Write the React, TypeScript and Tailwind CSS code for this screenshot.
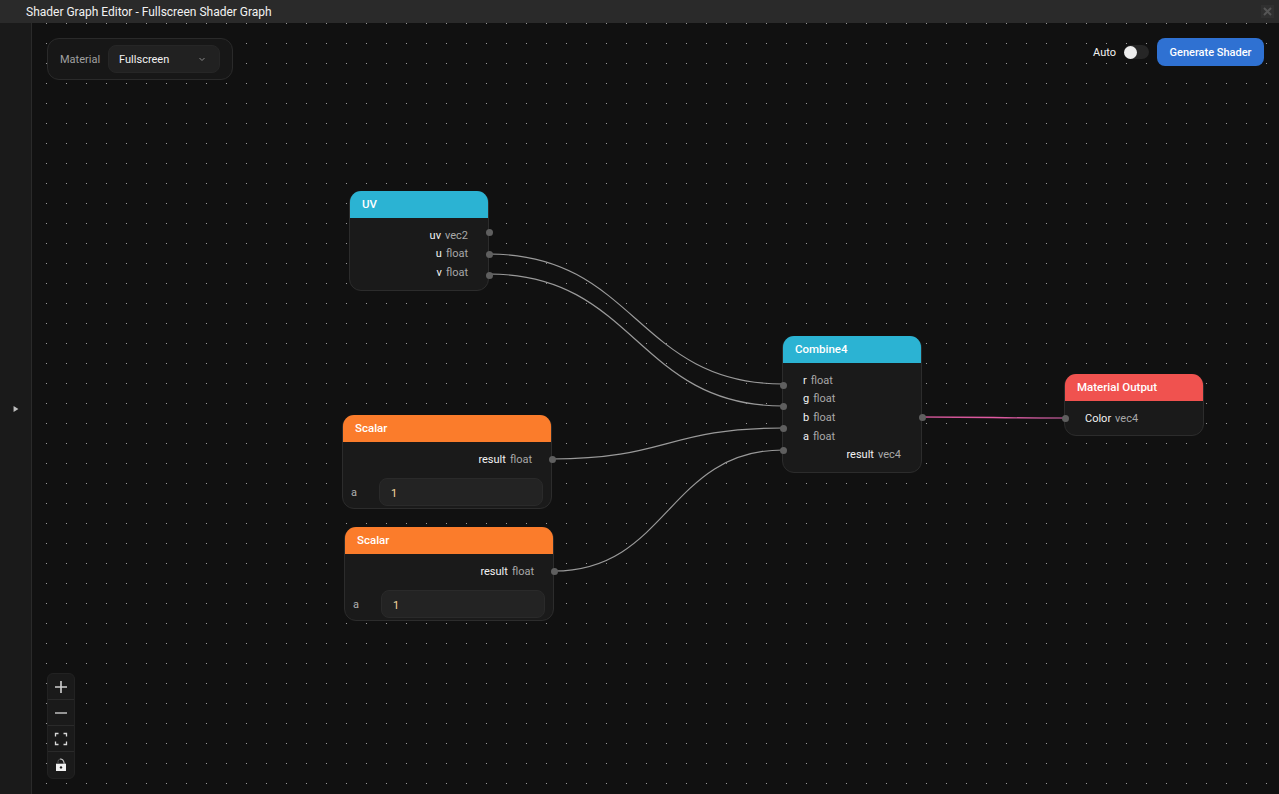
import React from "react";

const font = { fontFamily: 'Roboto, "Noto Sans", sans-serif' };

function Handle({ y, side }: { y: number; side: "left" | "right" }) {
  return (
    <span
      className={`absolute w-[7px] h-[7px] rounded-full bg-[#5f5f5f] ${side === "left" ? "left-[-3.5px]" : "right-[-4.5px]"}`}
      style={{ top: y - 0.5 }}
    />
  );
}

function Port({ name, type, right }: { name: string; type: string; right?: boolean }) {
  return (
    <div className={`h-[18.6px] flex items-center gap-[4px] text-[11px] leading-none ${right ? "justify-end" : ""}`}>
      <span className="text-[#f2f2f2]">{name}</span>
      <span className="text-[#a8a8a8]">{type}</span>
    </div>
  );
}

function Node({
  title,
  color,
  x,
  y,
  w,
  h,
  children,
}: {
  title: string;
  color: string;
  x: number;
  y: number;
  w: number;
  h: number;
  children: React.ReactNode;
}) {
  return (
    <div
      className="absolute rounded-[12px] border border-[#2c2c2c] bg-[#1a1a1a]"
      style={{ left: x - 32, top: y - 23, width: w, height: h }}
    >
      <div
        className="h-[27px] -mt-px rounded-t-[11px] px-[12px] flex items-center text-[11.5px] font-medium text-white"
        style={{ backgroundColor: color }}
      >
        {title}
      </div>
      {children}
    </div>
  );
}

function ScalarBody() {
  return (
    <div className="pt-[8px] pl-[8px] pr-[8px]">
      <div className="pr-[11px]">
        <Port name="result" type="float" right />
      </div>
      <div className="mt-[9.4px] flex items-center">
        <span className="w-[28px] pt-[3px] text-[11px] text-[#b0b0b0]">a</span>
        <div className="flex-1 h-[28px] rounded-[8px] border border-[#2a2a2a] bg-[#232323] pl-[11px] pt-[5px] flex items-center text-[11px] text-[#f5d9a0]">
          1
        </div>
      </div>
    </div>
  );
}

function ZoomButton({ children, last }: { children: React.ReactNode; last?: boolean }) {
  return (
    <div className={`h-[26px] flex items-center justify-center ${last ? "" : "border-b border-[#2a2a2a]"}`}>
      {children}
    </div>
  );
}

export default function App() {
  return (
    <div className="w-[1279px] h-[794px] overflow-hidden flex flex-col bg-[#111111] text-white" style={font}>
      <div className="h-[23px] shrink-0 bg-[#2a2a2a] flex items-center justify-between pl-[26px] pr-[5px]">
        <span className="text-[12px] text-[#f2f2f2]">Shader Graph Editor - Fullscreen Shader Graph</span>
        <div className="w-[13px] h-[13px] bg-[#303030] flex items-center justify-center">
          <svg width="9" height="9" viewBox="0 0 9 9">
            <path d="M1 1L8 8M8 1L1 8" stroke="#555" strokeWidth="2" />
          </svg>
        </div>
      </div>
      <div className="flex-1 flex min-h-0">
        <div className="w-[32px] shrink-0 bg-[#1a1a1a] border-r border-r-[#2a2a2a] flex items-center">
          <svg width="32" height="8" viewBox="0 0 32 8">
            <path d="M14 1L19 4L14 7Z" fill="#bdbdbd" />
          </svg>
        </div>
        <div className="relative flex-1 bg-[#111111]">
          <svg className="absolute left-[-32px] top-[-23px]" width="1279" height="794" fill="none">
            <defs>
              <pattern id="dots" patternUnits="userSpaceOnUse" x="6" y="3" width="20" height="20">
                <rect width="1" height="1" fill="#9c9c9c" shapeRendering="crispEdges" />
              </pattern>
              <linearGradient id="pink" gradientUnits="userSpaceOnUse" x1="922" y1="0" x2="1065" y2="0">
                <stop offset="0" stopColor="#c0508c" />
                <stop offset="0.5" stopColor="#e35ba4" />
                <stop offset="1" stopColor="#9a4a7c" />
              </linearGradient>
            </defs>
            <rect x="32" y="23" width="1247" height="771" fill="url(#dots)" />
            <path d="M489 254C636 254 636 384 783 384" stroke="#9a9a9a" strokeWidth="1.2" />
            <path d="M489 274C636 274 636 406 783 406" stroke="#9a9a9a" strokeWidth="1.2" />
            <path d="M552 459C667 459 667 428 783 428" stroke="#9a9a9a" strokeWidth="1.2" />
            <path d="M554 571C668 571 668 450 783 450" stroke="#9a9a9a" strokeWidth="1.2" />
            <path d="M922 417C993 417 993 418 1065 418" stroke="url(#pink)" strokeWidth="1.3" />
          </svg>

          <Node title="UV" color="#2bb3d3" x={349} y={191} w={140} h={100}>
            <div className="pt-[8px] pr-[20px]">
              <Port name="uv" type="vec2" right />
              <Port name="u" type="float" right />
              <Port name="v" type="float" right />
            </div>
            <Handle y={37} side="right" />
            <Handle y={59} side="right" />
            <Handle y={80} side="right" />
          </Node>

          <Node title="Scalar" color="#fb7c2b" x={342} y={415} w={210} h={94}>
            <ScalarBody />
            <Handle y={40} side="right" />
          </Node>

          <Node title="Scalar" color="#fb7c2b" x={344} y={527} w={210} h={94}>
            <ScalarBody />
            <Handle y={40} side="right" />
          </Node>

          <Node title="Combine4" color="#2bb3d3" x={782} y={336} w={140} h={137}>
            <div className="pt-[8px] px-[20px]">
              <Port name="r" type="float" />
              <Port name="g" type="float" />
              <Port name="b" type="float" />
              <Port name="a" type="float" />
              <Port name="result" type="vec4" right />
            </div>
            <Handle y={45} side="left" />
            <Handle y={66.5} side="left" />
            <Handle y={88} side="left" />
            <Handle y={110} side="left" />
            <Handle y={77} side="right" />
          </Node>

          <Node title="Material Output" color="#f0524f" x={1064} y={374} w={140} h={62}>
            <div className="pt-[8px] px-[20px]">
              <Port name="Color" type="vec4" />
            </div>
            <Handle y={40} side="left" />
          </Node>

          <div className="absolute left-[15px] top-[15px] w-[186px] h-[42px] rounded-[12px] border border-[#2a2a2a] bg-[#171717] flex items-center pl-[12px] pr-[12px] gap-[8px]">
            <span className="pt-[2px] text-[11px] text-[#a0a0a0]">Material</span>
            <div className="flex-1 h-[28px] rounded-[8px] border border-[#262626] bg-[#212121] pl-[10px] pr-[12px] flex items-center justify-between text-[11px] text-[#f2f2f2]">
              <span className="pt-[2px]">Fullscreen</span>
              <svg width="10" height="10" viewBox="0 0 10 10" fill="none">
                <path d="M2.5 4L5 6.5L7.5 4" stroke="#8a8a8a" strokeWidth="1" />
              </svg>
            </div>
          </div>

          <div className="absolute right-[15px] top-[15px] h-[28px] flex items-center">
            <span className="pt-[2px] text-[11px] text-[#f2f2f2] mr-[8px]">Auto</span>
            <div className="w-[25px] h-[14px] rounded-full bg-[#262626] mr-[8px] relative">
              <span className="absolute left-0 top-[0.5px] w-[13px] h-[13px] rounded-full bg-[#eeeeee]" />
            </div>
            <div className="w-[107px] h-[28px] pt-[2px] rounded-[8px] bg-[#2f71d2] flex items-center justify-center text-[11px] font-medium text-white">
              Generate Shader
            </div>
          </div>

          <div className="absolute left-[15px] bottom-[15px] w-[28px] rounded-[6px] bg-[#1a1a1a] border border-[#222222]">
            <ZoomButton>
              <svg width="14" height="14" viewBox="0 0 14 14">
                <path d="M7 1V13M1 7H13" stroke="#d0d0d0" strokeWidth="1.6" />
              </svg>
            </ZoomButton>
            <ZoomButton>
              <svg width="14" height="14" viewBox="0 0 14 14">
                <path d="M1 7H13" stroke="#e8e8e8" strokeWidth="1.2" />
              </svg>
            </ZoomButton>
            <ZoomButton>
              <svg width="14" height="14" viewBox="0 0 14 14" fill="none">
                <path d="M1.5 4.5V1.5H4.5M9.5 1.5H12.5V4.5M12.5 9.5V12.5H9.5M4.5 12.5H1.5V9.5" stroke="#d8d8d8" strokeWidth="1.3" />
              </svg>
            </ZoomButton>
            <ZoomButton last>
              <svg width="14" height="14" viewBox="0 0 14 14">
                <path d="M2 5.7H12V13H2Z" fill="#f0f0f0" />
                <path d="M6 1Q9.8 1 10.2 5.7" fill="none" stroke="#d0d0d0" strokeWidth="1.1" />
                <path d="M4 5.7V3.5Q4 1.6 6 1" fill="none" stroke="#555555" strokeWidth="1" />
                <circle cx="7" cy="9.4" r="1.2" fill="#1a1a1a" />
              </svg>
            </ZoomButton>
          </div>
        </div>
      </div>
    </div>
  );
}
